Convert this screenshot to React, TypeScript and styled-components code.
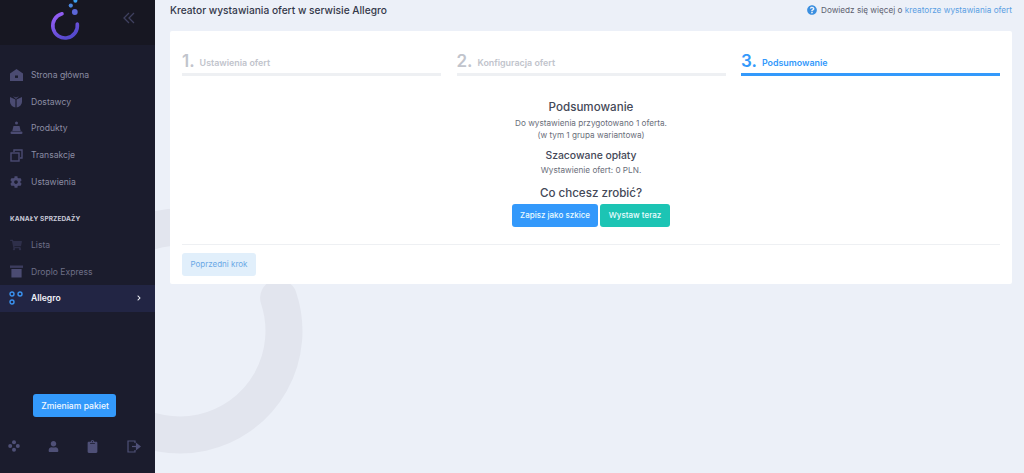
import React from "react";
import styled, { createGlobalStyle } from "styled-components";
import { FaCog, FaShoppingCart, FaUser, FaClipboard, FaQuestionCircle, FaChevronRight } from "react-icons/fa";

const Global = createGlobalStyle`
  html, body { margin: 0; padding: 0; height: 473px; overflow: hidden; background: #ecf0f8; }
  * { box-sizing: border-box; }
  body { font-family: "Inter", "Liberation Sans", sans-serif; }
`;
const Page = styled.div`display: flex; height: 473px; width: 1024px; position: relative; overflow: hidden;`;
const Side = styled.aside`width: 155px; flex: none; background: #1b1c2d; display: flex; flex-direction: column; position: relative; z-index: 2;`;
const SideHead = styled.div`height: 45px; background: #171722; display: flex; align-items: flex-start; justify-content: space-between; padding: 0 20px 0 50px; color: #3f405f; overflow: hidden;`;
const Chevrons = styled.svg`margin-top: 12px;`;
const Nav = styled.nav`display: flex; flex-direction: column; padding-top: 17px;`;
const Row = styled.div<{ $active?: boolean; $dim?: boolean }>`
  height: 26.6px; display: flex; align-items: center; padding: 0 13px 0 10px; gap: 9px;
  font-size: 8.6px; font-weight: ${p => (p.$active ? 600 : 400)};
  color: ${p => (p.$active ? "#f2f3fa" : p.$dim ? "#6d6e86" : "#8b8ca3")};
  background: ${p => (p.$active ? "#222544" : "transparent")};
  svg { flex: none; }
`;
const RowIcon = styled.span<{ $dim?: boolean }>`width: 12px; height: 14px; display: flex; align-items: center; justify-content: center; color: ${p => (p.$dim ? "#2e2f4a" : "#4b4b72")};`;
const RowLabel = styled.span`flex: 1;`;
const Section = styled.div`font-size: 6.5px; font-weight: 700; color: #c9cad8; padding: 20px 0 8px 10px; line-height: 9px; letter-spacing: 0.1px;`;
const Spacer = styled.div`flex: 1;`;
const Upgrade = styled.button`align-self: flex-start; width: 83px; height: 23px; margin-left: 33px; border: 0; border-radius: 3px; background: #3399fb; color: #f2f8ff; font: 500 8.6px "Inter", sans-serif; padding: 0 0 0 1px;`;
const Foot = styled.div`display: flex; justify-content: space-between; align-items: center; padding: 0 14px 0 8px; height: 18px; margin: 20px 0 18px; color: #4f5077;`;
const Main = styled.main`flex: 1; padding: 0 12px 0 15px; position: relative; z-index: 1; min-width: 0;`;
const Head = styled.header`height: 31px; padding-bottom: 12px; display: flex; align-items: center; justify-content: space-between;`;
const Title = styled.h1`margin: 0; font-size: 10.2px; font-weight: 500; color: #34384a;`;
const Help = styled.div`display: flex; align-items: center; gap: 4px; font-size: 8.2px; color: #5c6070; svg { color: #3b8fe0; } a { color: #5b9fe3; text-decoration: none; }`;
const Card = styled.section`background: #fff; height: 253px; border-radius: 2px; padding: 20px 12px 0; display: flex; flex-direction: column;`;
const Steps = styled.div`display: flex; justify-content: space-between;`;
const Step = styled.div<{ $w: number; $on?: boolean }>`
  width: ${p => p.$w}px; height: 25px; display: flex; align-items: baseline; gap: 5px;
  border-bottom: 3px solid ${p => (p.$on ? "#3399fb" : "#eef0f3")};
  color: ${p => (p.$on ? "#3399fb" : "#c1c4cc")};
`;
const StepNum = styled.span`font-size: 17px; font-weight: 600; line-height: 20px;`;
const StepText = styled.span`font-size: 8.9px; font-weight: 600; position: relative; top: -1px;`;
const Summary = styled.div`text-align: center; display: flex; flex-direction: column; align-items: center; padding-top: 24px; color: #444857;`;
const H2 = styled.div`font-size: 11.6px; font-weight: 500; line-height: 14px; margin-bottom: 4px;`;
const H3 = styled.div`font-size: 10.4px; font-weight: 500; line-height: 14px; margin: 8px 0 2px;`;
const H4 = styled.div`font-size: 11.6px; font-weight: 500; line-height: 14px; margin: 9px 0 4px;`;
const Small = styled.div`font-size: 8.2px; line-height: 11.5px; color: #6a6e7a;`;
const Actions = styled.div`display: flex; gap: 2px;`;
const Action = styled.button<{ $c: string; $w: number }>`width: ${p => p.$w}px; height: 23px; border: 0; border-radius: 3px; background: ${p => p.$c}; color: #eafcff; font: 500 8px "Inter", sans-serif; padding: 0;`;
const Divider = styled.hr`margin: 17px 0 8px; border: 0; border-top: 1px solid #eef0f3; width: 100%;`;
const BackRow = styled.div`display: flex;`;
const Back = styled.button`width: 74px; height: 23px; border: 0; border-radius: 3px; background: #e1effb; color: #6aa8e6; font: 400 8px "Inter", sans-serif; padding: 0;`;
const Mark = styled.svg`position: absolute; left: 0; top: 0; z-index: 0; pointer-events: none;`;

const Logo = () => (
  <svg width="32" height="45" viewBox="0 0 32 45">
    <defs><linearGradient id="lg" x1="0" y1="0" x2="0.6" y2="1"><stop offset="0" stopColor="#9a5ff8" /><stop offset="1" stopColor="#5549cc" /></linearGradient></defs>
    <path d="M12 13.8 A12.3 12.3 0 1 0 27.3 24" fill="none" stroke="url(#lg)" strokeWidth="3.6" strokeLinecap="round" />
    <circle cx="24.8" cy="12" r="2.9" fill="#5c66d8" />
    <circle cx="20.8" cy="5.6" r="2.1" fill="#4a86e0" />
    <circle cx="25.4" cy="0.8" r="2" fill="#3ba0f0" />
  </svg>
);
const Home = () => (
  <svg width="13" height="12" viewBox="0 0 13 12" fill="currentColor"><path d="M6.5 0 13 4.6V12H0V4.6z" /><rect x="5" y="6.5" width="3" height="2.4" fill="#1b1c2d" /></svg>
);
const Supplier = () => (
  <svg width="12" height="12" viewBox="0 0 12 12" fill="currentColor"><path d="M0 1 5.4 3.6v8C2 10.6 0.2 8.6 0 6z" /><path d="M12 1 6.6 3.6v8C10 10.6 11.8 8.6 12 6z" /><path d="M3 0.2 6 1.6 9 0.2 6 3z" /></svg>
);
const Produkty = () => (
  <svg width="13" height="14" viewBox="0 0 13 14" fill="currentColor"><circle cx="6.5" cy="2" r="1.5" /><path d="M3.5 5h6l1.2 5H2.3z" /><rect x="0.5" y="10.6" width="12" height="2.4" rx="1.2" /></svg>
);
const Clone = () => (
  <svg width="13" height="13" viewBox="0 0 13 13" fill="none" stroke="currentColor" strokeWidth="1.4"><path d="M4 3V1h8v8h-2" /><rect x="1" y="4" width="8" height="8" /></svg>
);
const Express = () => (
  <svg width="13" height="13" viewBox="0 0 13 13" fill="currentColor"><rect x="0" y="0.5" width="13" height="2.4" fill="#3c3c5e" /><rect x="1.4" y="4" width="10.2" height="8.5" /></svg>
);
const Nodes = () => (
  <svg width="14" height="14" viewBox="0 0 14 14" fill="none" stroke="#3a92ef" strokeWidth="1.4"><circle cx="3" cy="3" r="2" /><circle cx="11" cy="3" r="2" /><circle cx="3" cy="11" r="2" /></svg>
);
const Quad = () => (
  <svg width="12" height="12" viewBox="0 0 12 12" fill="currentColor"><circle cx="6" cy="2.2" r="2" /><circle cx="2.2" cy="6" r="2" /><circle cx="9.8" cy="6" r="2" /><circle cx="6" cy="9.8" r="2" /></svg>
);
const Exit = () => (
  <svg width="14" height="13" viewBox="0 0 14 13" fill="none" stroke="currentColor" strokeWidth="1.2"><path d="M8 3V1H1v11h7v-2" /><path d="M5 6.5h5" /><path d="M9.5 3.8v5.4l3.5-2.7z" fill="currentColor" /></svg>
);

export default function App() {
  return (
    <Page>
      <Global />
      <Mark width="320" height="473" viewBox="0 0 320 473">
        <path d="M278.6 298 A104 104 0 1 1 180 227" fill="none" stroke="#e2e5ee" strokeWidth="37" strokeLinecap="round" />
      </Mark>
      <Side>
        <SideHead>
          <Logo />
          <Chevrons width="12" height="12" viewBox="0 0 12 12" fill="none" stroke="currentColor" strokeWidth="1.3"><path d="M6 1 1 6l5 5" /><path d="M11 1 6 6l5 5" /></Chevrons>
        </SideHead>
        <Nav>
          <Row><RowIcon><Home /></RowIcon><RowLabel>Strona główna</RowLabel></Row>
          <Row><RowIcon><Supplier /></RowIcon><RowLabel>Dostawcy</RowLabel></Row>
          <Row><RowIcon><Produkty /></RowIcon><RowLabel>Produkty</RowLabel></Row>
          <Row><RowIcon><Clone /></RowIcon><RowLabel>Transakcje</RowLabel></Row>
          <Row><RowIcon><FaCog size={12} /></RowIcon><RowLabel>Ustawienia</RowLabel></Row>
          <Section>KANAŁY SPRZEDAŻY</Section>
          <Row $dim><RowIcon $dim><FaShoppingCart size={12} /></RowIcon><RowLabel>Lista</RowLabel></Row>
          <Row $dim><RowIcon><Express /></RowIcon><RowLabel>Droplo Express</RowLabel></Row>
          <Row $active><RowIcon><Nodes /></RowIcon><RowLabel>Allegro</RowLabel><FaChevronRight size={6} /></Row>
        </Nav>
        <Spacer />
        <Upgrade>Zmieniam pakiet</Upgrade>
        <Foot><Quad /><FaUser size={11} /><FaClipboard size={13} /><Exit /></Foot>
      </Side>
      <Main>
        <Head>
          <Title>Kreator wystawiania ofert w serwisie Allegro</Title>
          <Help><FaQuestionCircle size={10} /><span>Dowiedz się więcej o <a>kreatorze wystawiania ofert</a></span></Help>
        </Head>
        <Card>
          <Steps>
            <Step $w={259}><StepNum>1.</StepNum><StepText>Ustawienia ofert</StepText></Step>
            <Step $w={269}><StepNum>2.</StepNum><StepText>Konfiguracja ofert</StepText></Step>
            <Step $w={259} $on><StepNum>3.</StepNum><StepText>Podsumowanie</StepText></Step>
          </Steps>
          <Summary>
            <H2>Podsumowanie</H2>
            <Small>Do wystawienia przygotowano 1 oferta.</Small>
            <Small>(w tym 1 grupa wariantowa)</Small>
            <H3>Szacowane opłaty</H3>
            <Small>Wystawienie ofert: 0 PLN.</Small>
            <H4>Co chcesz zrobić?</H4>
            <Actions>
              <Action $c="#3399fb" $w={86}>Zapisz jako szkice</Action>
              <Action $c="#1cc4b4" $w={70}>Wystaw teraz</Action>
            </Actions>
          </Summary>
          <Divider />
          <BackRow><Back>Poprzedni krok</Back></BackRow>
        </Card>
      </Main>
    </Page>
  );
}
